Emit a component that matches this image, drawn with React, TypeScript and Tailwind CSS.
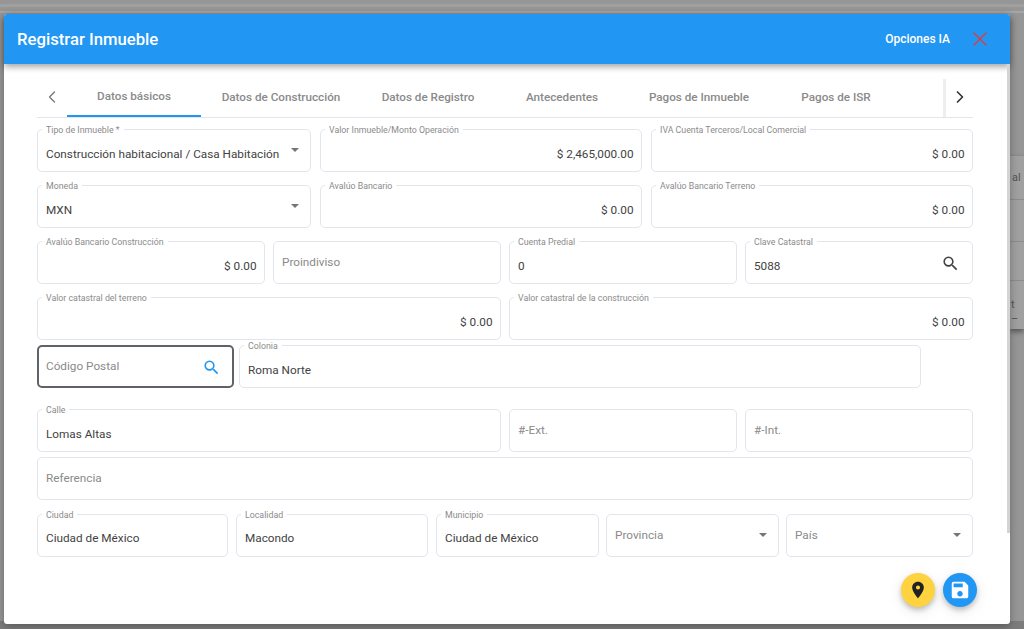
import { ChevronLeft, ChevronRight, X } from "lucide-react";

type FieldProps = {
  label?: string;
  value?: string;
  placeholder?: string;
  right?: boolean;
  select?: boolean;
  search?: "gray" | "blue";
  focused?: boolean;
  tight?: boolean;
  className?: string;
};

function SearchIcon({ className }: { className: string }) {
  return (
    <svg width="19" height="19" viewBox="0 0 24 24" fill="currentColor" className={className}>
      <path d="M15.5 14h-.79l-.28-.27A6.471 6.471 0 0 0 16 9.5 6.5 6.5 0 1 0 9.5 16c1.61 0 3.09-.59 4.23-1.57l.27.28v.79l5 4.99L20.49 19l-4.99-5zm-6 0C7.01 14 5 11.99 5 9.5S7.01 5 9.5 5 14 7.01 14 9.5 11.99 14 9.5 14z" />
    </svg>
  );
}

function Field({ label, value, placeholder, right, select, search, focused, tight, className = "" }: FieldProps) {
  return (
    <div
      className={`relative h-[43px] shrink-0 rounded-[5px] bg-white ${
        focused ? "border-2 border-[#5f6368]" : "border border-[#e3e5ec]"
      } ${className}`}
    >
      {label && (
        <span className="absolute left-[4px] top-[-6px] bg-white px-[4px] text-[8.8px] leading-[12px] text-[#8b8b8b] whitespace-nowrap">
          {label}
        </span>
      )}
      {placeholder && (
        <span
          className={`absolute text-[11.75px] leading-[16px] text-[#8a8a8a] whitespace-nowrap ${
            focused ? "left-[7px] top-[11px]" : "left-[8px] top-[12px]"
          }`}
        >
          {placeholder}
        </span>
      )}
      {value && (
        <span
          className={`absolute text-[11.75px] leading-[16px] text-[#424242] whitespace-nowrap ${
            tight ? "top-[15px]" : "top-[16px]"
          } ${right ? "right-[7.5px]" : "left-[8px]"}`}
        >
          {value}
        </span>
      )}
      {select && (
        <span className="absolute right-[11px] top-[18px] h-0 w-0 border-x-[4px] border-t-[4px] border-x-transparent border-t-[#757575]" />
      )}
      {search === "gray" && <SearchIcon className="absolute right-[12px] top-[12px] text-[#424242]" />}
      {search === "blue" && <SearchIcon className="absolute right-[11px] top-[11px] text-[#2196f3]" />}
    </div>
  );
}

const tabs = [
  { name: "Datos básicos", w: "w-[134px]", active: true },
  { name: "Datos de Construcción", w: "w-[160px]" },
  { name: "Datos de Registro", w: "w-[134px]" },
  { name: "Antecedentes", w: "w-[134px]" },
  { name: "Pagos de Inmueble", w: "w-[140px]" },
  { name: "Pagos de ISR", w: "w-[134px]" },
];

export default function App() {
  return (
    <div className="relative h-[629px] w-[1024px] overflow-hidden bg-[#969696] font-['Roboto',sans-serif]">
      {/* fondo detras del modal */}
      <div className="absolute left-0 top-[4px] h-[3px] w-full bg-[#a0a0a0]" />
      <div className="absolute left-0 top-[11px] h-[2px] w-full bg-[#a6a6a6]" />
      <div className="absolute bottom-0 left-0 h-[8px] w-full bg-[#7c7c7c]" />
      <div className="absolute right-0 top-[155px] flex h-[174px] w-[14px] flex-col bg-[#a0a0a0] text-[11px] leading-[14px] text-[#555] shadow-[0_3px_5px_rgba(0,0,0,0.4)]">
        <div className="h-[45px] shrink-0 border-y border-[#8c8c8c] pl-[2px] pt-[15px]">al</div>
        <div className="h-[42px] shrink-0 border-b border-[#8c8c8c]" />
        <div className="h-[39px] shrink-0 border-b border-[#8c8c8c]" />
        <div className="pl-[1px] pt-[17px]">t –</div>
      </div>

      <div className="absolute left-[4px] top-[14px] flex h-[610px] w-[1006px] flex-col rounded-[3px] bg-white shadow-[0_2px_8px_rgba(0,0,0,0.3)]">
        <div className="relative flex h-[50px] shrink-0 items-center justify-between rounded-t-[3px] bg-[#2196f3] pl-[13px] pr-[18px] shadow-[0_3px_6px_rgba(0,0,0,0.35)]">
          <span className="pt-[1px] text-[16.7px] font-medium text-white">Registrar Inmueble</span>
          <div className="flex items-center gap-[18px]">
            <span className="text-[12px] font-medium text-white">Opciones IA</span>
            <X size={24} strokeWidth={1.3} className="text-[#e53935]" />
          </div>
        </div>

        <div className="relative flex-1 pl-[33px] pr-[37px]">
          <div className="absolute right-0 top-0 h-[469px] w-[3px] bg-[#d4d4d4]" />

          {/* tabs */}
          <div className="mt-[15px] flex h-[39px] w-[936px] items-stretch border-b border-[#e3e5ec]">
            <div className="flex w-[30px] shrink-0 items-center justify-center pb-[3px]">
              <ChevronLeft size={20} strokeWidth={1.5} className="text-[#757575]" />
            </div>
            {tabs.map((t) => (
              <div
                key={t.name}
                className={`flex ${t.w} shrink-0 items-center justify-center pb-[1px] text-[11.7px] font-medium text-[#8a8a8a] ${
                  t.active ? "border-b-2 border-[#2196f3]" : ""
                }`}
              >
                {t.name}
              </div>
            ))}
            <div className="ml-auto flex w-[30px] shrink-0 items-center justify-center border-l-[3px] border-[#eeeeee] pb-[3px]">
              <ChevronRight size={20} strokeWidth={2} className="text-[#333]" />
            </div>
          </div>

          <div className="mt-[11px] flex gap-[9px]">
            <Field className="w-[274px]" label="Tipo de Inmueble *" value="Construcción habitacional / Casa Habitación" select />
            <Field className="w-[322px]" label="Valor Inmueble/Monto Operación" value="$ 2,465,000.00" right />
            <Field className="w-[322px]" label="IVA Cuenta Terceros/Local Comercial" value="$ 0.00" right />
          </div>

          <div className="mt-[13px] flex gap-[9px]">
            <Field className="w-[274px]" label="Moneda" value="MXN" select />
            <Field className="w-[322px]" label="Avalúo Bancario" value="$ 0.00" right />
            <Field className="w-[322px]" label="Avalúo Bancario Terreno" value="$ 0.00" right />
          </div>

          <div className="mt-[13px] flex gap-[8px]">
            <Field className="w-[228px]" label="Avalúo Bancario Construcción" value="$ 0.00" right />
            <Field className="w-[228px]" placeholder="Proindiviso" />
            <Field className="w-[228px]" label="Cuenta Predial" value="0" />
            <Field className="w-[228px]" label="Clave Catastral" value="5088" search="gray" />
          </div>

          <div className="mt-[13px] flex gap-[8px]">
            <Field className="w-[464px]" label="Valor catastral del terreno" value="$ 0.00" right />
            <Field className="w-[464px]" label="Valor catastral de la construcción" value="$ 0.00" right />
          </div>

          <div className="mt-[5px] flex gap-[5px]">
            <Field className="w-[197px]" placeholder="Código Postal" search="blue" focused />
            <Field className="w-[682px]" label="Colonia" value="Roma Norte" />
          </div>

          <div className="mt-[21px] flex gap-[8px]">
            <Field className="w-[464px]" label="Calle" value="Lomas Altas" />
            <Field className="w-[228px]" placeholder="#-Ext." />
            <Field className="w-[228px]" placeholder="#-Int." />
          </div>

          <div className="mt-[5px]">
            <Field className="w-[936px]" placeholder="Referencia" />
          </div>

          <div className="mt-[14px] flex">
            <Field className="w-[191px]" label="Ciudad" value="Ciudad de México" tight />
            <Field className="ml-[8px] w-[192px]" label="Localidad" value="Macondo" tight />
            <Field className="ml-[8px] w-[163px]" label="Municipio" value="Ciudad de México" tight />
            <Field className="ml-[7px] w-[173px]" placeholder="Provincia" select />
            <Field className="ml-[7px] w-[187px]" placeholder="País" select />
          </div>

          <div className="mt-[16px] flex w-[940px] justify-end gap-[8px]">
            <button className="flex h-[34px] w-[34px] items-center justify-center rounded-full bg-[#ffd23f] shadow-[0_3px_5px_rgba(0,0,0,0.2),0_4px_14px_rgba(0,0,0,0.1)]">
              <svg width="20" height="20" viewBox="0 0 24 24" fill="#212121">
                <path d="M12 2C8.13 2 5 5.13 5 9c0 5.25 7 13 7 13s7-7.75 7-13c0-3.87-3.13-7-7-7zm0 9.5a2.5 2.5 0 1 1 0-5 2.5 2.5 0 0 1 0 5z" />
              </svg>
            </button>
            <button className="flex h-[34px] w-[34px] items-center justify-center rounded-full bg-[#2196f3] shadow-[0_3px_5px_rgba(0,0,0,0.2),0_4px_14px_rgba(0,0,0,0.1)]">
              <svg width="22" height="22" viewBox="0 0 24 24" fill="#ffffff">
                <path d="M17 3H5a2 2 0 0 0-2 2v14a2 2 0 0 0 2 2h14c1.1 0 2-.9 2-2V7l-4-4zm-5 16c-1.66 0-3-1.34-3-3s1.34-3 3-3 3 1.34 3 3-1.34 3-3 3zm3-10H5V5h10v4z" />
              </svg>
            </button>
          </div>
        </div>
      </div>
    </div>
  );
}
